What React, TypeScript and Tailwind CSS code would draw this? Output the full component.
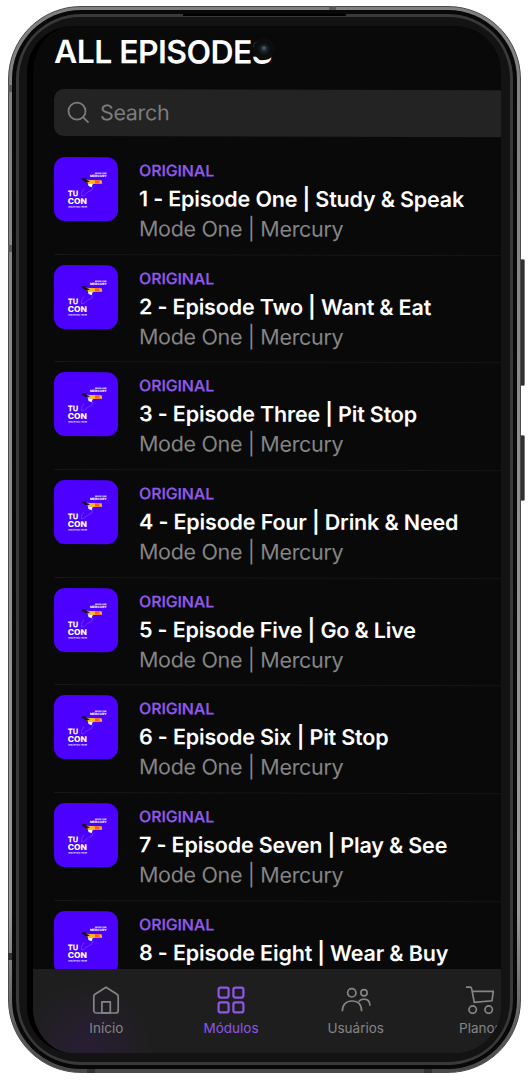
const episodes = [
  "1 - Episode One | Study & Speak",
  "2 - Episode Two | Want & Eat",
  "3 - Episode Three | Pit Stop",
  "4 - Episode Four | Drink & Need",
  "5 - Episode Five | Go & Live",
  "6 - Episode Six | Pit Stop",
  "7 - Episode Seven | Play & See",
  "8 - Episode Eight | Wear & Buy",
];

const Cover = () => {
  return (
    <svg viewBox="0 0 64 64" className="h-16 w-16 shrink-0 rounded-[11px] bg-[#4c00ff]">
      <g fill="#fff" fontFamily="Inter, sans-serif" fontWeight="800">
        <text x="13.7" y="39.2" fontSize="7.8" textLength="10.500" lengthAdjust="spacingAndGlyphs">TU</text>
        <text x="13.7" y="46.8" fontSize="8" textLength="19.2" lengthAdjust="spacingAndGlyphs">CON</text>
        <text x="41" y="16.8" fontSize="2" textLength="11.700" lengthAdjust="spacingAndGlyphs">MODE ONE</text>
        <text x="36" y="19.8" fontSize="3" textLength="16.700" lengthAdjust="spacingAndGlyphs">MERCURY</text>
        <text x="14.3" y="50.4" fontSize="1.9" textLength="18.700" lengthAdjust="spacingAndGlyphs">INGLÉS PARA TODOS</text>
      </g>
      <path d="M39 29.500l-1.200 3.500-4 2-3.500 3-2.800.6.2-3.200 2.200-4" fill="none" stroke="#9a7bff" strokeWidth=".4" />
      <path d="M32 22.500l4 .3 11.600.2.600 3.600-11.200.2-5-1.800z" fill="#ffb51c" />
      <path d="M41 23.200h4.500v3.200H41z" fill="#ff5a28" />
      <path d="M27.700 21l5 .2-.7 1.300 4 1.500-3.500 1.500-4.500-3z" fill="#151030" />
      <path d="M33.800 26l5 .8-1.300 3.200-2.900-1.200z" fill="#fff" />
    </svg>
  );
};

const HomeIcon = () => (
  <svg viewBox="0 0 28 28" className="h-7 w-7" fill="none" stroke="currentColor" strokeWidth="1.700" strokeLinejoin="round">
    <path d="M1.800 10.500c0-1 .4-1.800 1.200-2.300L14 1.200l11 7c.8.5 1.200 1.300 1.200 2.300v13.900a2.600 2.600 0 0 1-2.600 2.600H4.400a2.600 2.600 0 0 1-2.600-2.600z" />
    <path d="M9.900 15.800h8.400v11H9.900z" />
  </svg>
);

const GridIcon = () => (
  <svg viewBox="0 0 28 28" className="h-7 w-7" fill="none" stroke="currentColor" strokeWidth="2.200">
    <rect x="1.600" y="1.600" width="10" height="10" rx="2" />
    <rect x="16.400" y="1.600" width="10" height="10" rx="2" />
    <rect x="1.600" y="16.400" width="10" height="10" rx="2" />
    <rect x="16.400" y="16.400" width="10" height="10" rx="2" />
  </svg>
);

const UsersIcon = () => (
  <svg viewBox="0 0 30 28" className="h-7 w-[30px]" fill="none" stroke="currentColor" strokeWidth="1.700">
    <circle cx="10.800" cy="6.800" r="4.200" />
    <circle cx="23" cy="6.800" r="3.100" />
    <path d="M1.300 25.300c0-6.500 3.600-10.300 9.700-10.300s9.600 3.800 9.600 10.300" />
    <path d="M17.700 15.500c1.200-1.600 2.900-2.400 5-2.400 3.900 0 6.300 2.600 6.300 6.600" />
  </svg>
);

const CartIcon = () => (
  <svg viewBox="0 0 28 28" className="h-7 w-7" fill="none" stroke="currentColor" strokeWidth="1.700">
    <path d="M0 1.200h4.200c.9 0 1.300.4 1.400 1.200L8.300 16.300 26 14.800l1.300-9.500H6.200" />
    <circle cx="6.700" cy="23.600" r="3.700" />
    <circle cx="22.700" cy="23.600" r="3.700" />
  </svg>
);

const tabs = [
  { label: "Início", icon: <HomeIcon /> },
  { label: "Módulos", icon: <GridIcon />, active: true },
  { label: "Usuários", icon: <UsersIcon /> },
  { label: "Planos", icon: <CartIcon /> },
];

const Screen = () => {
  return (
    <div className="flex min-w-0 flex-1 flex-col overflow-hidden rounded-[46px] border-l-[6px] border-black bg-[#090909]">
      <div className="flex min-h-0 w-[500px] flex-1 origin-left skew-y-[0.15deg] flex-col pt-[6px] pl-[21px]">
        <h1 className="mb-[17px] text-[32px] leading-[40px] font-semibold tracking-[-0.6px] text-white">ALL EPISODES</h1>
        <div className="mb-[11px] flex h-[47px] shrink-0 items-center gap-[9px] rounded-[10px] bg-[#232323] pl-[13px]">
          <svg viewBox="0 0 24 24" className="h-6 w-6" fill="none" stroke="#7c7c7c" strokeWidth="1.800">
            <circle cx="10" cy="10" r="8.500" />
            <path d="M16 16l5.500 5.500" />
          </svg>
          <span className="text-[21.500px] tracking-[-0.35px] text-[#7c7c7c]">Search</span>
        </div>
        <ul className="flex flex-col">
          {episodes.map((title) => (
            <li key={title} className="flex h-[107.700px] shrink-0 gap-[21px] border-b border-[#161616] pt-[10px]">
              <Cover />
              <div className="flex flex-col pt-px whitespace-nowrap">
                <p className="pb-[2px] text-base leading-6 font-semibold tracking-[-0.16px] text-[#8f57e8]">ORIGINAL</p>
                <p className="text-[21.500px] leading-[29px] font-semibold tracking-[-0.17px] text-white">{title}</p>
                <p className="text-[21.500px] leading-[30px] tracking-[-0.330px] text-[#858585]">Mode One | Mercury</p>
              </div>
            </li>
          ))}
        </ul>
      </div>
      <nav className="z-10 flex h-[84px] shrink-0 bg-[#1e1e1e] bg-[radial-gradient(circle_at_54px_78px,#291e35_0,#1e1e1e_66px)] pt-[17px] pl-[11px]">
        {tabs.map((tab) => (
          <div
            key={tab.label}
            className={`flex w-[124.700px] shrink-0 flex-col items-center gap-[5px] text-[13.500px] leading-[18px] ${tab.active ? "text-[#8f57e8]" : "text-[#858585]"}`}
          >
            {tab.icon}
            <span>{tab.label}</span>
          </div>
        ))}
      </nav>
    </div>
  );
};

// Antenna lines, speaker and camera drawn over the frame
const FrameDetails = () => {
  return (
    <div className="pointer-events-none absolute -inset-px z-20">
      <svg viewBox="0 0 513 1067" className="h-full w-full">
        <g fill="#5a5a5a">
          <rect x="0" y="79" width="4" height="7" />
          <rect x="0" y="239" width="4" height="7" />
          <rect x="321" y="0" width="7" height="4" />
        </g>
        <g fill="#333">
          <rect x="0" y="947" width="4" height="7" />
          <rect x="79" y="1063" width="8" height="4" />
          <rect x="416" y="1063" width="8" height="4" />
        </g>
        <rect x="175" y="8" width="163" height="2" fill="#000" />
        <circle cx="256" cy="43" r="11" fill="#0d0d0d" />
        <circle cx="256" cy="43" r="5.500" fill="#121c20" />
        <circle cx="256" cy="42.500" r="3" fill="#2c363d" />
        <circle cx="256" cy="42" r="1.300" fill="#56616b" />
      </svg>
    </div>
  );
};

const App = () => {
  return (
    <div className="flex h-[1080px] w-[532px] overflow-hidden bg-white pt-[6px] pl-2 font-['Inter',sans-serif]">
      <div className="relative flex h-[1067px] w-[513px] shrink-0 rounded-[73px] border border-[#4a4a4a] bg-linear-to-b from-[#808080] from-0% via-[#9a9a9a] via-85% to-[#484848] p-[3px]">
        <div className="flex min-w-0 flex-1 rounded-[69px] bg-[#080808] p-1">
          <div className="flex min-w-0 flex-1 rounded-[65px] bg-[#393939] p-[3px]">
            <div className="flex min-w-0 flex-1 rounded-[61px] bg-[#131313] pt-[9px] pr-[9px] pb-[9px] pl-2">
              <Screen />
            </div>
          </div>
        </div>
        <FrameDetails />
      </div>

      {/* Side buttons */}
      <div className="flex flex-col gap-[49px] pt-[253px]">
        <div className="h-[127px] w-1 rounded-r-[2px] border border-l-0 border-[#777] bg-[#303030]" />
        <div className="h-[66px] w-1 rounded-r-[2px] border border-l-0 border-[#777] bg-[#303030]" />
      </div>
    </div>
  );
};

export default App;
